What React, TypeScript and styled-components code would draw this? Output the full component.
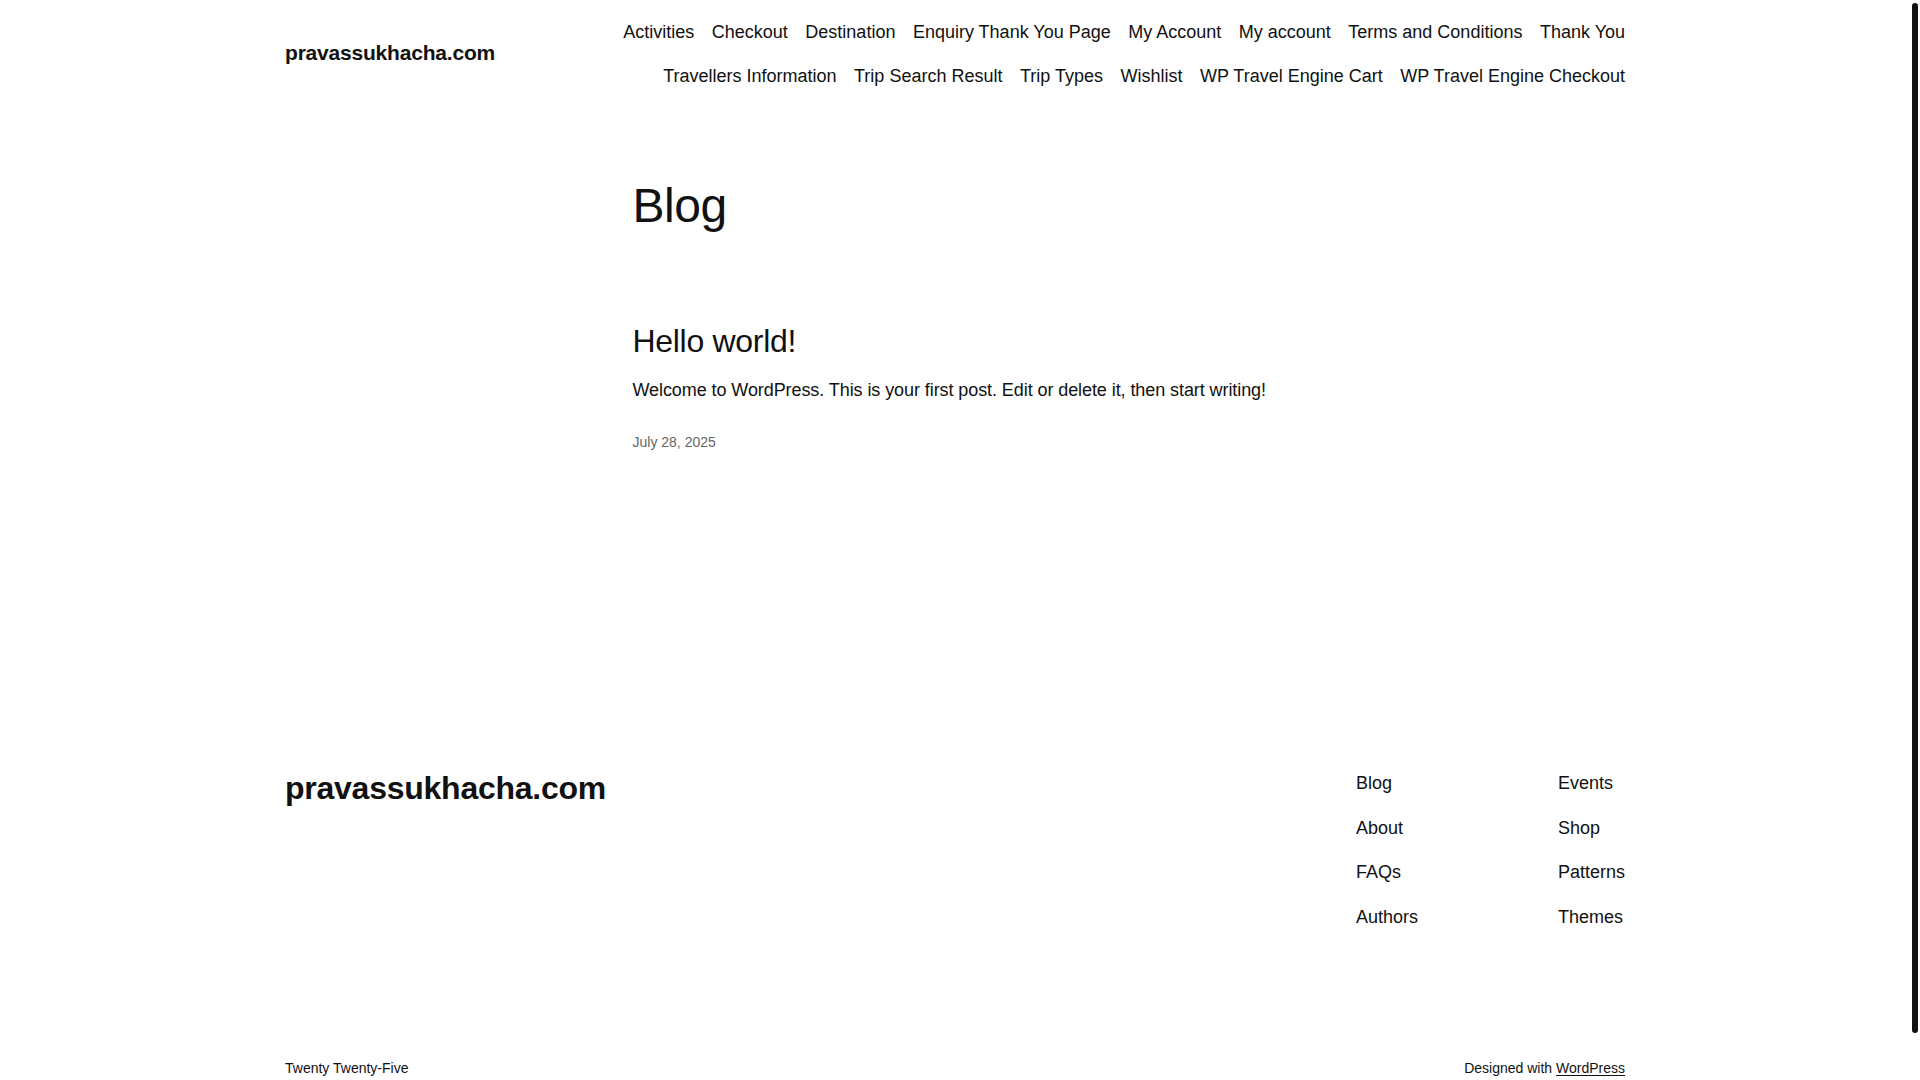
import React from 'react';
import styled, { createGlobalStyle } from 'styled-components';

const GlobalStyle = createGlobalStyle`
  html, body {
    margin: 0;
    padding: 0;
    background: #ffffff;
  }
  body {
    font-family: "Liberation Sans", Arial, sans-serif;
    color: #111111;
    -webkit-font-smoothing: antialiased;
  }
`;

// the screenshot shows a thin dark scrollbar over the right gutter
const ScrollThumb = styled.div`
  position: fixed;
  top: 3px;
  right: 2px;
  width: 6px;
  height: 1030px;
  border-radius: 3px;
  background: #111111;
`;

const Page = styled.div`
  display: flex;
  flex-direction: column;
  padding-right: 10px;
`;

const Wide = styled.div`
  width: 1340px;
  margin: 0 auto;
`;

const HeaderBar = styled(Wide)`
  display: flex;
  justify-content: space-between;
  align-items: center;
  gap: 40px;
  padding: 19px 0 18px;
`;

const SiteTitle = styled.a<{ size: number }>`
  font-size: ${(p) => p.size}px;
  font-weight: 700;
  letter-spacing: ${(p) => (p.size > 24 ? '-0.25px' : '-0.2px')};
  line-height: 1.2;
  color: #111111;
  text-decoration: none;
  white-space: nowrap;
`;

const HeaderTitle = styled(SiteTitle)`
  margin-bottom: 4px;
`;

const HeaderNav = styled.nav`
  flex: 1;
  display: flex;
  flex-wrap: wrap;
  justify-content: flex-end;
  column-gap: 17.5px;
  row-gap: 17px;
`;

const NavLink = styled.a`
  font-size: 18px;
  line-height: 27px;
  color: #111111;
  text-decoration: none;
  white-space: nowrap;
`;

const Main = styled.main`
  width: 645px;
  margin: 0 auto;
  padding: 71px 0 316px;
`;

const PageTitle = styled.h1`
  margin: 0 0 89px;
  font-size: 48px;
  font-weight: 400;
  line-height: 54px;
  letter-spacing: -0.5px;
`;

const PostTitle = styled.h2`
  margin: 0 0 16px;
  font-size: 32px;
  font-weight: 400;
  line-height: 1.2;
  letter-spacing: -0.3px;
`;

const Excerpt = styled.p`
  margin: 0 0 27px;
  font-size: 18px;
  line-height: 28.8px;
  letter-spacing: -0.08px;
`;

const PostDate = styled.time`
  display: block;
  font-size: 14px;
  line-height: 21px;
  color: #666666;
`;

const Footer = styled(Wide)`
  display: flex;
  flex-direction: column;
  gap: 127px;
  padding-bottom: 52px;
`;

const FooterTop = styled.div`
  display: flex;
  justify-content: space-between;
  align-items: flex-start;
`;

const FooterMenus = styled.div`
  display: flex;
  gap: 140px;
  padding-top: 1px;
`;

const FooterColumn = styled.nav`
  display: flex;
  flex-direction: column;
  row-gap: 17.6px;
`;

const FooterBottom = styled.div`
  display: flex;
  justify-content: space-between;
  font-size: 14px;
  line-height: 21px;
`;

const Credit = styled.a`
  color: #111111;
  text-decoration: underline;
  text-decoration-thickness: 1px;
  text-underline-offset: 2px;
`;

const headerLinks = [
  'Activities',
  'Checkout',
  'Destination',
  'Enquiry Thank You Page',
  'My Account',
  'My account',
  'Terms and Conditions',
  'Thank You',
  'Travellers Information',
  'Trip Search Result',
  'Trip Types',
  'Wishlist',
  'WP Travel Engine Cart',
  'WP Travel Engine Checkout',
];

const footerColumns = [
  ['Blog', 'About', 'FAQs', 'Authors'],
  ['Events', 'Shop', 'Patterns', 'Themes'],
];

const App: React.FC = () => {
  return (
    <Page>
      <GlobalStyle />
      <HeaderBar as="header">
        <HeaderTitle size={21} href="#">pravassukhacha.com</HeaderTitle>
        <HeaderNav>
          {headerLinks.map((label) => (
            <NavLink key={label} href="#">{label}</NavLink>
          ))}
        </HeaderNav>
      </HeaderBar>

      <Main>
        <PageTitle>Blog</PageTitle>
        <article>
          <PostTitle>Hello world!</PostTitle>
          <Excerpt>
            Welcome to WordPress. This is your first post. Edit or delete it, then start writing!
          </Excerpt>
          <PostDate dateTime="2025-07-28">July 28, 2025</PostDate>
        </article>
      </Main>

      <Footer as="footer">
        <FooterTop>
          <SiteTitle size={32} href="#">pravassukhacha.com</SiteTitle>
          <FooterMenus>
            {footerColumns.map((col, i) => (
              <FooterColumn key={i}>
                {col.map((label) => (
                  <NavLink key={label} href="#">{label}</NavLink>
                ))}
              </FooterColumn>
            ))}
          </FooterMenus>
        </FooterTop>
        <FooterBottom>
          <span>Twenty Twenty-Five</span>
          <span>
            Designed with <Credit href="#">WordPress</Credit>
          </span>
        </FooterBottom>
      </Footer>

      <ScrollThumb />
    </Page>
  );
};

export default App;
